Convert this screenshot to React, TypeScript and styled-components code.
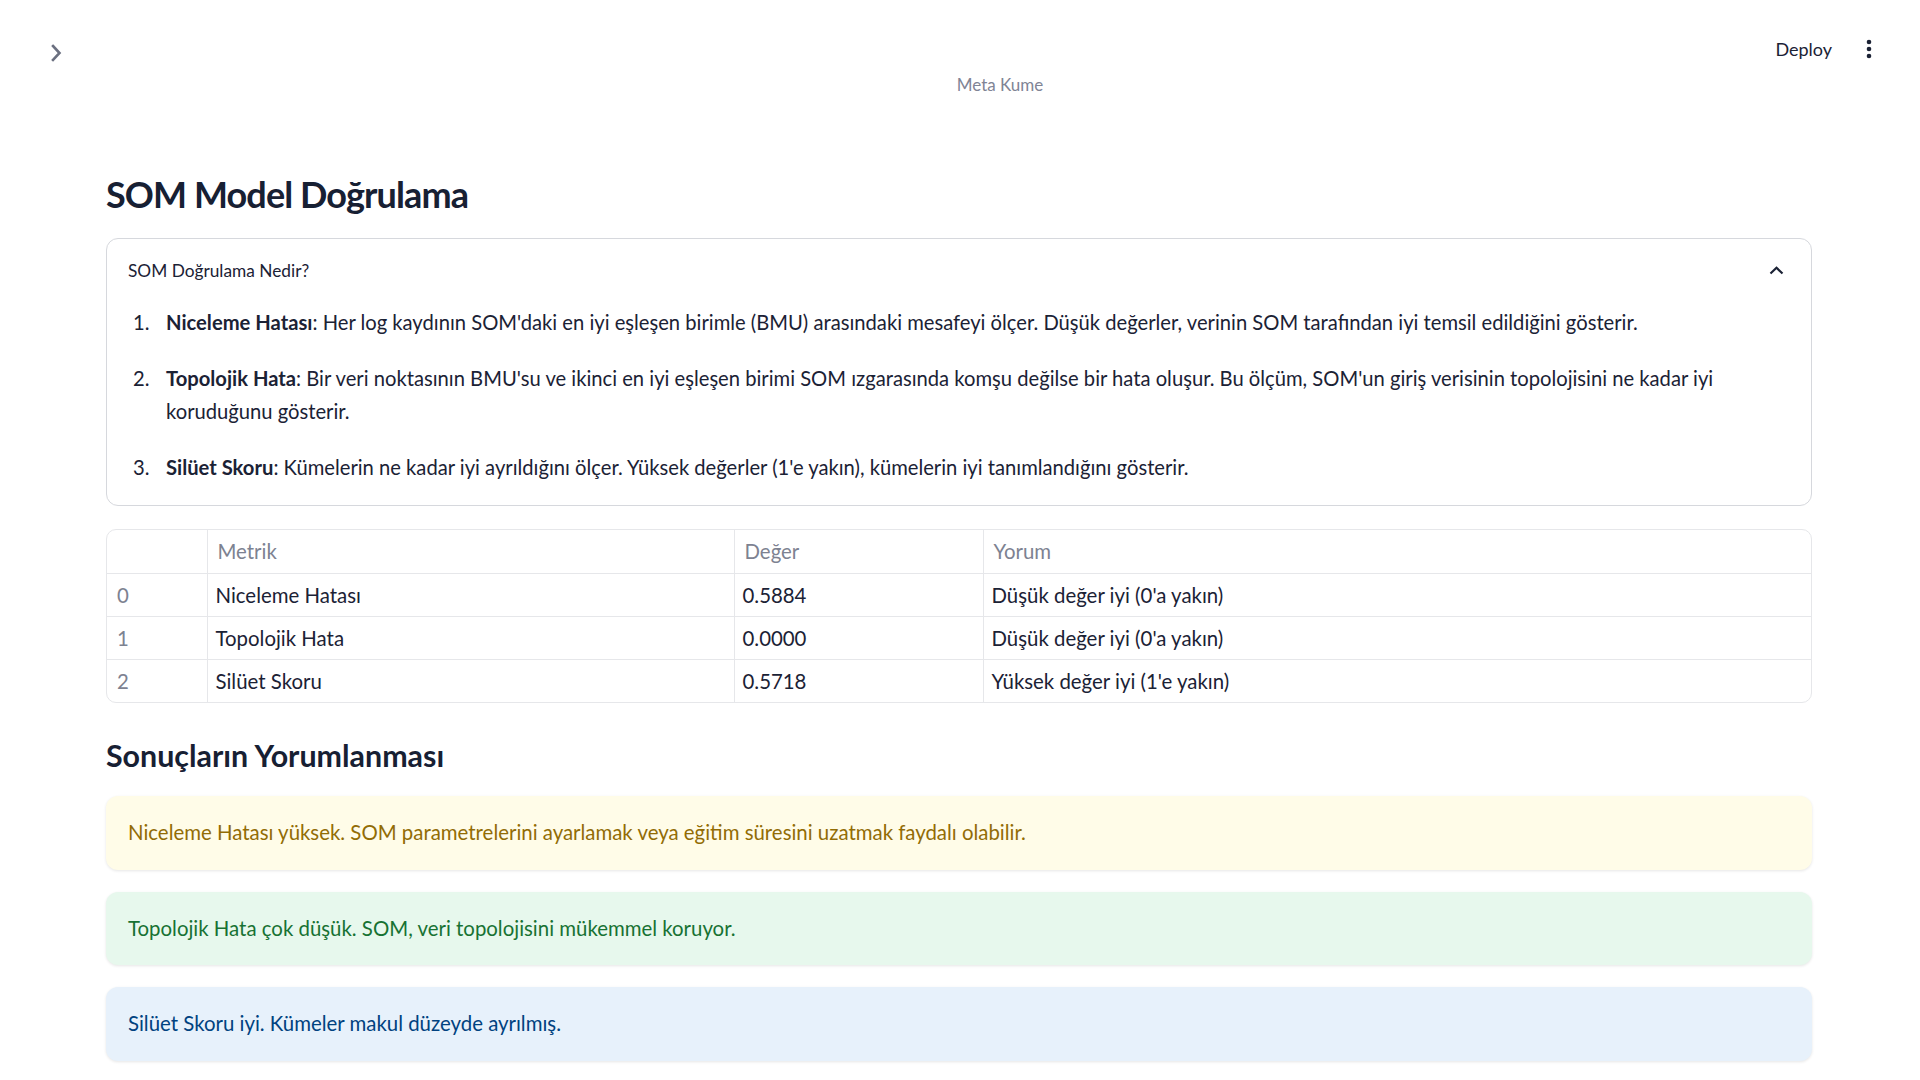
import React from "react";
import styled, { createGlobalStyle } from "styled-components";

const GlobalStyle = createGlobalStyle`
  html, body { margin: 0; padding: 0; background: #ffffff; }
  body {
    font-family: Lato, "Noto Sans", sans-serif;
    color: #1b2235;
    -webkit-font-smoothing: antialiased;
  }
  * { box-sizing: border-box; }
`;

const Page = styled.div`
  width: 1920px;
  min-height: 1080px;
  overflow: hidden;
`;

const TopBar = styled.header`
  display: flex;
  align-items: center;
  justify-content: space-between;
  height: 40px;
  margin-top: 29px;
  padding: 0 48px 0 51px;
`;

const SidebarToggle = styled.button`
  border: 0;
  background: none;
  padding: 0;
  margin-top: 7px;
  display: flex;
  color: #6b7080;
  cursor: pointer;
`;

const Actions = styled.div`
  display: flex;
  align-items: center;
  gap: 34px;
`;

const DeployButton = styled.button`
  border: 0;
  background: none;
  padding: 0;
  font-family: inherit;
  font-size: 18px;
  color: #1b2235;
  cursor: pointer;
`;

const MenuButton = styled.button`
  border: 0;
  background: none;
  padding: 0;
  display: flex;
  color: #1b2235;
`;

const Caption = styled.div`
  padding-left: 80px;
  margin-top: 6px;
  text-align: center;
  font-size: 17px;
  line-height: 20px;
  color: #808495;
`;

const Main = styled.main`
  margin: 76px 108px 0 106px;
  display: flex;
  flex-direction: column;
`;

const Title = styled.h1`
  margin: 0;
  font-size: 36px;
  letter-spacing: -0.9px;
  line-height: 46px;
  font-weight: 700;
  color: #172033;
`;

const Expander = styled.section`
  margin-top: 21px;
  border: 1px solid #d6d8dd;
  border-radius: 12px;
`;

const ExpanderHeader = styled.div`
  display: flex;
  align-items: center;
  justify-content: space-between;
  height: 62px;
  padding: 0 27px 0 21px;
  font-size: 17.3px;
  color: #1b2235;
`;

const ExpanderBody = styled.ol`
  list-style: none;
  margin: 0;
  padding: 5px 40px 21px 26px;
`;

const Item = styled.li`
  display: flex;
  font-size: 20.2px;
  line-height: 33.5px;
  & + & { margin-top: 22px; }
`;

const ItemNumber = styled.span`
  flex: 0 0 33px;
`;

const ItemText = styled.span`
  flex: 1;
  b { font-weight: 700; }
`;

const TableWrap = styled.div`
  margin-top: 23px;
  border: 1px solid #e6e7ea;
  border-radius: 10px;
  overflow: hidden;
`;

const Table = styled.table`
  width: 100%;
  border-collapse: collapse;
  table-layout: fixed;
  font-size: 20.4px;
`;

const Th = styled.th`
  height: 43px;
  padding: 0 10px 0 10px;
  text-align: left;
  font-weight: 400;
  color: #7d8291;
  border-right: 1px solid #e6e7ea;
  border-bottom: 1px solid #e6e7ea;
  &:last-child { border-right: 0; }
`;

const Td = styled.td<{ $muted?: boolean }>`
  height: 43px;
  padding: 0 10px 0 8px;
  color: ${(p) => (p.$muted ? "#7d8291" : "#1b2235")};
  border-right: 1px solid #e6e7ea;
  border-bottom: 1px solid #e6e7ea;
  &:first-child { padding-left: 10px; }
  &:last-child { border-right: 0; }
  tr:last-child & { border-bottom: 0; }
`;

const SubTitle = styled.h2`
  margin: 34px 0 0;
  font-size: 30.4px;
  line-height: 36px;
  font-weight: 700;
  color: #172033;
`;

const Alerts = styled.div`
  margin-top: 23px;
  display: flex;
  flex-direction: column;
  gap: 22px;
`;

const tones = {
  warning: { bg: "#fffce8", fg: "#926c05" },
  success: { bg: "#e7f8ed", fg: "#177233" },
  info: { bg: "#e7f1fb", fg: "#004280" },
};

const Alert = styled.div<{ $tone: keyof typeof tones }>`
  padding: 20px 22px;
  border-radius: 12px;
  font-size: 20.4px;
  line-height: 33.5px;
  background: ${(p) => tones[p.$tone].bg};
  color: ${(p) => tones[p.$tone].fg};
  box-shadow: 0 1px 3px rgba(0, 0, 0, 0.1);
`;

const rows = [
  ["0", "Niceleme Hatası", "0.5884", "Düşük değer iyi (0'a yakın)"],
  ["1", "Topolojik Hata", "0.0000", "Düşük değer iyi (0'a yakın)"],
  ["2", "Silüet Skoru", "0.5718", "Yüksek değer iyi (1'e yakın)"],
];

export default function App() {
  return (
    <Page>
      <GlobalStyle />
      <TopBar>
        <SidebarToggle aria-label="Open sidebar">
          <svg width="11" height="18" viewBox="0 0 11 18" fill="none">
            <polyline points="2,2 8.5,9 2,16" stroke="currentColor" strokeWidth="2.6" strokeLinecap="square" />
          </svg>
        </SidebarToggle>
        <Actions>
          <DeployButton>Deploy</DeployButton>
          <MenuButton aria-label="Menu">
            <svg width="6" height="20" viewBox="0 0 6 20">
              <circle cx="3" cy="3" r="2.3" fill="currentColor" />
              <circle cx="3" cy="10" r="2.3" fill="currentColor" />
              <circle cx="3" cy="17" r="2.3" fill="currentColor" />
            </svg>
          </MenuButton>
        </Actions>
      </TopBar>
      <Caption>Meta Kume</Caption>
      <Main>
        <Title>SOM Model Doğrulama</Title>
        <Expander>
          <ExpanderHeader>
            <span>SOM Doğrulama Nedir?</span>
            <svg width="15" height="9" viewBox="0 0 15 9" fill="none">
              <polyline points="1.5,7.5 7.5,1.8 13.5,7.5" stroke="currentColor" strokeWidth="2.2" />
            </svg>
          </ExpanderHeader>
          <ExpanderBody>
            <Item>
              <ItemNumber>1.</ItemNumber>
              <ItemText>
                <b>Niceleme Hatası</b>: Her log kaydının SOM'daki en iyi eşleşen birimle (BMU) arasındaki mesafeyi ölçer. Düşük değerler, verinin SOM tarafından iyi temsil edildiğini gösterir.
              </ItemText>
            </Item>
            <Item>
              <ItemNumber>2.</ItemNumber>
              <ItemText>
                <b>Topolojik Hata</b>: Bir veri noktasının BMU'su ve ikinci en iyi eşleşen birimi SOM ızgarasında komşu değilse bir hata oluşur. Bu ölçüm, SOM'un giriş verisinin topolojisini ne kadar iyi koruduğunu gösterir.
              </ItemText>
            </Item>
            <Item>
              <ItemNumber>3.</ItemNumber>
              <ItemText>
                <b>Silüet Skoru</b>: Kümelerin ne kadar iyi ayrıldığını ölçer. Yüksek değerler (1'e yakın), kümelerin iyi tanımlandığını gösterir.
              </ItemText>
            </Item>
          </ExpanderBody>
        </Expander>
        <TableWrap>
          <Table>
            <colgroup>
              <col style={{ width: 100 }} />
              <col style={{ width: 527 }} />
              <col style={{ width: 249 }} />
              <col />
            </colgroup>
            <thead>
              <tr>
                <Th />
                <Th>Metrik</Th>
                <Th>Değer</Th>
                <Th>Yorum</Th>
              </tr>
            </thead>
            <tbody>
              {rows.map((r) => (
                <tr key={r[0]}>
                  <Td $muted>{r[0]}</Td>
                  <Td>{r[1]}</Td>
                  <Td>{r[2]}</Td>
                  <Td>{r[3]}</Td>
                </tr>
              ))}
            </tbody>
          </Table>
        </TableWrap>
        <SubTitle>Sonuçların Yorumlanması</SubTitle>
        <Alerts>
          <Alert $tone="warning">Niceleme Hatası yüksek. SOM parametrelerini ayarlamak veya eğitim süresini uzatmak faydalı olabilir.</Alert>
          <Alert $tone="success">Topolojik Hata çok düşük. SOM, veri topolojisini mükemmel koruyor.</Alert>
          <Alert $tone="info">Silüet Skoru iyi. Kümeler makul düzeyde ayrılmış.</Alert>
        </Alerts>
      </Main>
    </Page>
  );
}
